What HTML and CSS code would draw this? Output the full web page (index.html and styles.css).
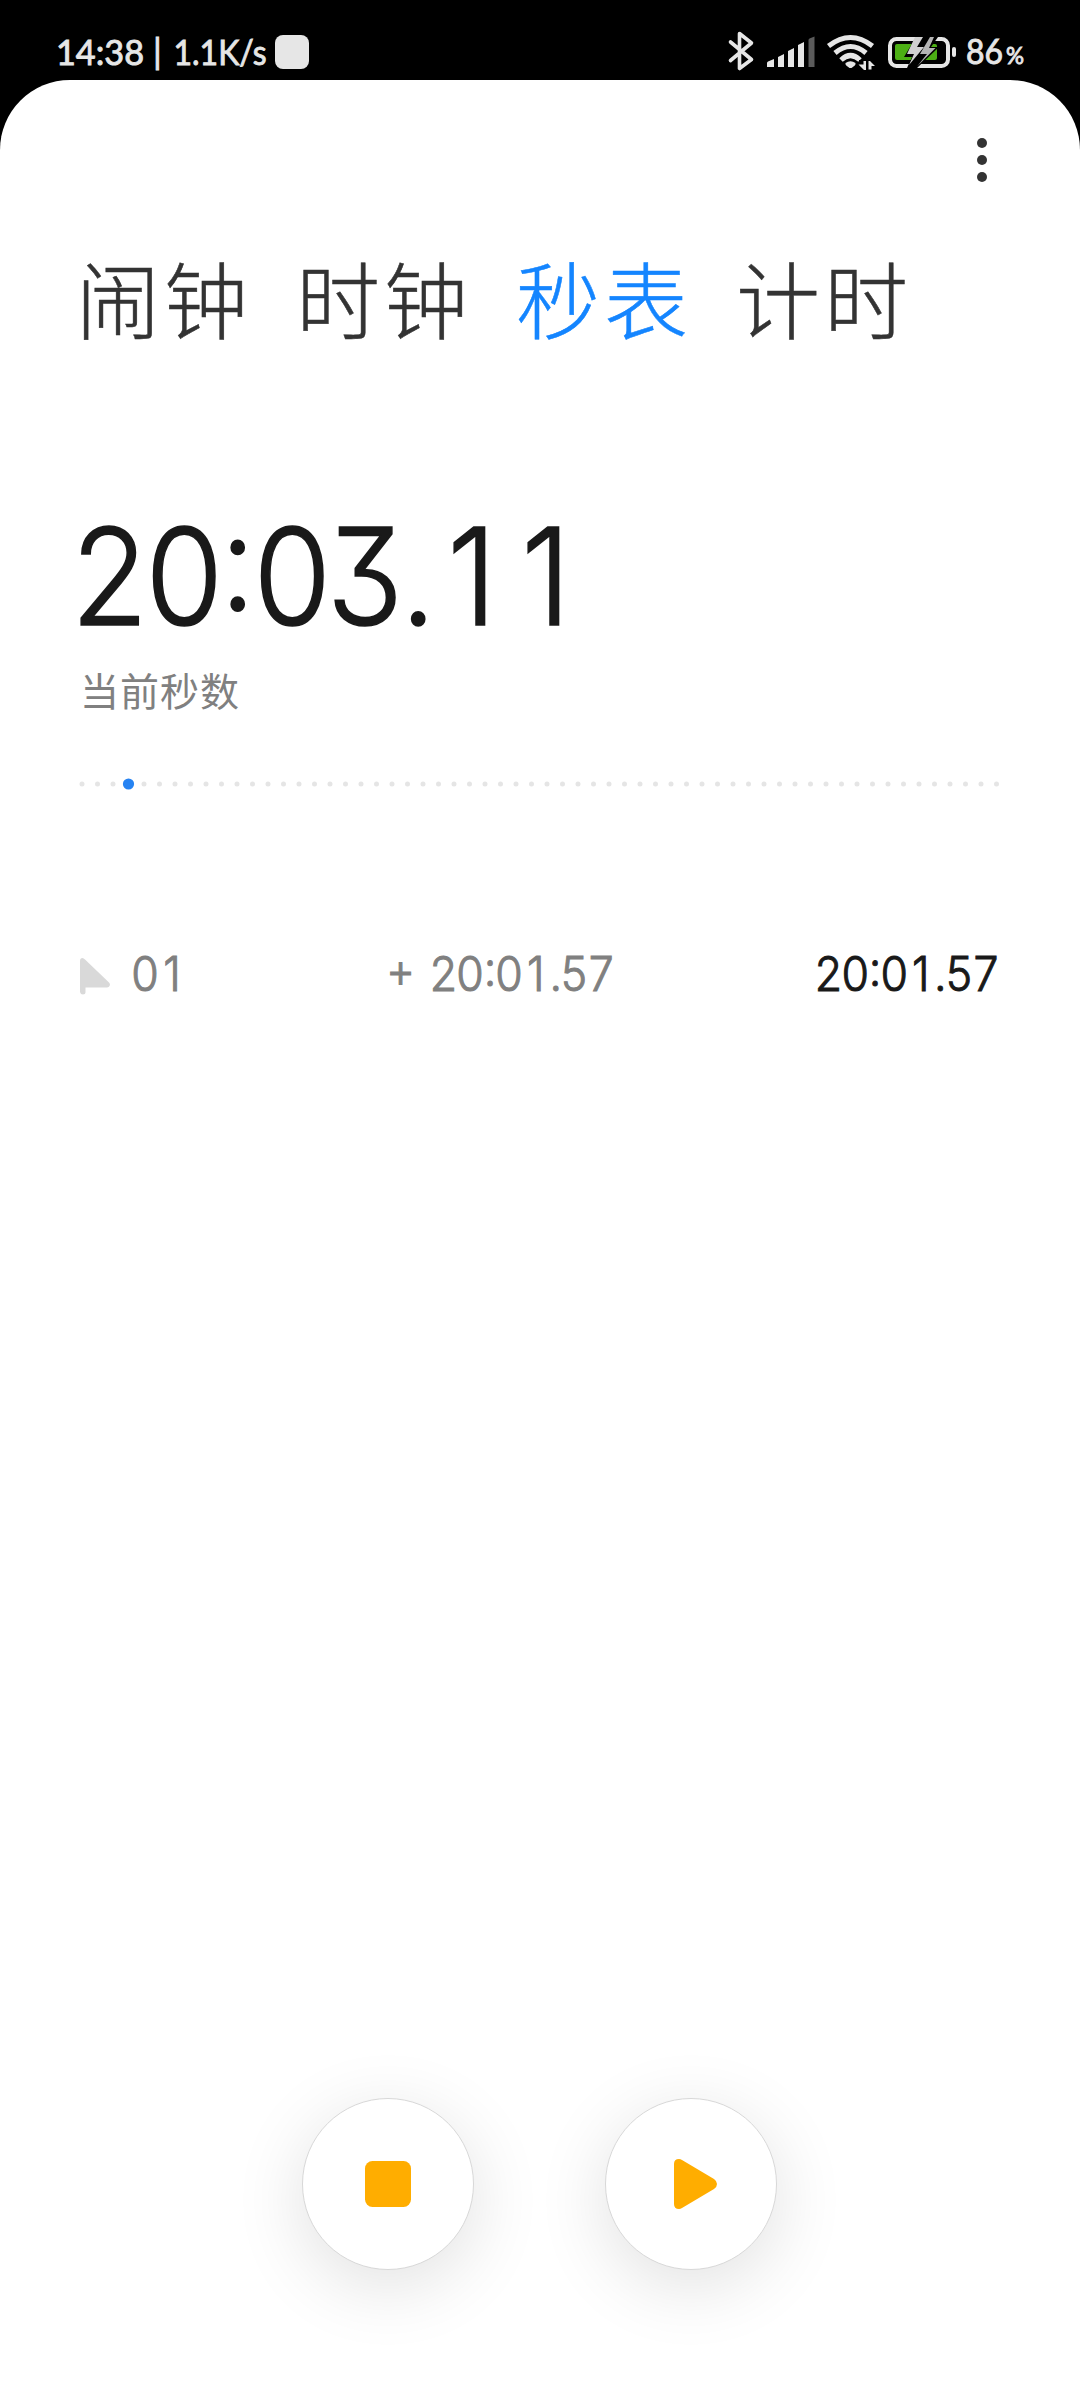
FILE: index.html
```html
<!DOCTYPE html>
<html lang="zh-CN">
<head>
<meta charset="utf-8">
<title>秒表</title>
<link rel="stylesheet" href="styles.css">
</head>
<body>
<header class="status">
  <svg class="status-text" width="218" height="52"><text x="-1" y="39" textLength="88" lengthAdjust="spacingAndGlyphs">14:38</text><text x="96" y="38">|</text><text x="116.500" y="39" textLength="93" lengthAdjust="spacingAndGlyphs">1.1K/s</text></svg>
  <i class="app-dot"></i>
  <svg class="status-icons" width="232" height="44" viewBox="0 0 232 44">
    <g fill="none" stroke="#e6e6e6" stroke-width="3.6" stroke-linejoin="round" stroke-linecap="round">
      <path d="M3.500 14 24.500 31.500 12.500 40.500V5.500L24.500 15 3.500 32.500"/>
    </g>
    <path fill="#e6e6e6" d="M40 39v-4q0-1 1-1.500l6-2.500v8zM51 39V29l6-3v13zM61 39V23l6-3v19zM71 39V17l6-3v25z"/>
    <path fill="#5b5b5b" d="M81.500 39V12q0-1 1-1.500l5-2v30.500z"/>
    <g fill="none" stroke="#e6e6e6" stroke-width="5">
      <path d="M101.500 18Q123.500 1 145.500 18M108 25Q123.500 12 139 25M114 32Q123.500 23 133 32"/>
    </g>
    <path fill="#e6e6e6" d="M118.500 35q5-3.500 10 0 .4 1.500-1 2.800L124.500 40h-2l-3-2.200q-1.400-1.300-1-2.800z"/>
    <path d="M132 32h14v12h-14z"/>
    <path fill="#e6e6e6" d="M136.500 33h2.500v9h-2l-5.500-5.500h5zM141.500 41.500V33h1.500l5 5h-3.500v3.500z"/>
    <rect x="163" y="11" width="58" height="27" rx="6.500" fill="none" stroke="#e6e6e6" stroke-width="4"/>
    <rect x="168" y="16" width="42" height="16" rx="2" fill="#4caf14"/>
    <rect x="225" y="19" width="4" height="10" rx="2" fill="#e6e6e6"/>
    <path d="M189 9 177 29h8l-5 11h10l22-21h-8l7-10z"/>
    <path fill="#d0d0d0" d="M188 9 180 26h7L182 37l15-18h-7l6-10z"/>
    <path fill="#b4b4b4" d="M203 9l-10 17h7L190 38.500 208.500 20H202l5-11z"/>
  </svg>
  <svg class="battery" width="62" height="52"><text x="0" y="38" textLength="37" lengthAdjust="spacingAndGlyphs">86</text><text class="percent" x="40" y="38" textLength="18" lengthAdjust="spacingAndGlyphs">%</text></svg>
</header>
<main class="sheet">
  <div class="toolbar"><div class="more"><i></i><i></i><i></i></div></div>
  <nav class="tabs">
    <span>闹钟</span><span>时钟</span><span class="active">秒表</span><span>计时</span>
  </nav>
  <svg class="timer" width="1080" height="174">
    <text transform="scale(.93 1)" x="117.700 198.100 255.600 314.200 392.500 449.800 507.500 587.100" y="140">20:03.11</text>
  </svg>
  <div class="caption">当前秒数</div>
  <svg class="track" width="924" height="12" viewBox="0 0 924 12">
    <path d="M4 6H920" stroke="#e5e5e5" stroke-width="5" stroke-linecap="round" stroke-dasharray="0 15.500"/>
    <circle cx="50.500" cy="6" r="5.600" fill="#2683f2"/>
  </svg>
  <div class="lap">
    <svg class="flag" width="30" height="37" viewBox="0 0 30 37"><path fill="#d9d9d9" d="M0 3Q0 0 2.500 0 3.500 0 5 1.500L29 24.500q1.500 1.500.8 3Q29 29.500 27 29.500H5.500v5Q5.500 36.500 3 36.500T0 34z"/></svg>
    <svg width="90" height="60"><text transform="scale(.92 1)" x="38 67.500" y="49">01</text></svg>
    <svg class="delta" width="240" height="60">
      <text transform="scale(.92 1)" x="22.300" y="49">+</text>
      <text transform="scale(.92 1)" x="69 97.800 119.600 140.200 169.300 191 210.900 240.500" y="49">20:01.57</text>
    </svg>
    <svg class="total" width="200" height="60"><text transform="scale(.92 1)" x="30.800 60.100 81.500 102.500 131.200 152.500 172.800 202.200" y="49">20:01.57</text></svg>
  </div>
  <footer class="controls">
    <button class="round" aria-label="停止"><svg width="46" height="46"><rect width="46" height="46" rx="7.500" fill="#ffad00"/></svg></button>
    <button class="round" aria-label="继续"><svg width="54" height="54" viewBox="0 0 54 54"><path fill="#ffad00" d="M10 7q0-5 5-5 1.500 0 3 1L50 22q3 2 3 5t-3 5L18 51q-1.500 1-3 1-5 0-5-5z"/></svg></button>
  </footer>
</main>
</body>
</html>
```
FILE: styles.css
```css
* { box-sizing: border-box; }
body {
  margin: 0;
  width: 1080px;
  height: 2400px;
  display: flex;
  flex-direction: column;
  background: #000;
  font-family: Inter, "Noto Sans CJK SC", sans-serif;
}
svg { flex: none; overflow: visible; }
.status {
  height: 80px;
  padding: 26px 52px 0 57px;
  display: flex;
}
.status text { font: 400 35px Lato, sans-serif; fill: #e6e6e6; stroke: #e6e6e6; stroke-width: .9px; }
.status .percent { font-size: 23px; }
.app-dot { width: 34px; height: 34px; margin-top: 9px; border-radius: 8px; background: #e6e6e6; }
.status-icons { margin: 2px 7px 0 auto; }
.sheet {
  height: 2320px;
  display: flex;
  flex-direction: column;
  background: #fff;
  border-radius: 70px 70px 0 0;
}
.toolbar { height: 150px; display: flex; justify-content: flex-end; padding: 58px 93px 0 0; }
.more { display: flex; flex-direction: column; gap: 7px; }
.more i { width: 10px; height: 10px; border-radius: 50%; background: #333; }
.tabs {
  height: 140px;
  display: flex;
  gap: 44px;
  padding-left: 76px;
  font: 300 84px/133px "Noto Sans CJK SC", sans-serif;
  color: #333;
  -webkit-text-stroke: .5px;
}
.tabs span { width: 176px; letter-spacing: 4px; white-space: nowrap; }
.tabs .active { color: #1485ff; }
.timer { margin-top: 115px; }
.timer text {
  font-size: 135px;
  font-weight: 300;
  font-feature-settings: "cv09", "case";
  text-anchor: middle;
  fill: #191919;
  stroke: #191919;
  stroke-width: 1.6px;
}
.caption { height: 60px; padding-left: 80px; font: 400 39px/60px "Noto Sans CJK SC", sans-serif; color: #808080; letter-spacing: 1px; }
.track { margin: 59px 0 0 78px; }
.lap {
  height: 60px;
  margin: 152px 0 0 80px;
  display: flex;
}
.lap text {
  font-size: 48.5px;
  font-weight: 300;
  font-feature-settings: "case";
  text-anchor: middle;
  fill: #808080;
  stroke: #808080;
  stroke-width: 1px;
}
.lap .total text { fill: #191919; stroke: #191919; }
.flag { margin-top: 16px; }
.delta { margin-left: 180px; }
.total { margin-left: 180px; }
.controls {
  margin-top: auto;
  height: 302px;
  padding-right: 1px;
  display: flex;
  justify-content: center;
  gap: 131px;
}
.round {
  width: 172px;
  height: 172px;
  padding: 0;
  display: grid;
  place-items: center;
  border: 1px solid #d8d8d8;
  border-radius: 50%;
  background: #fff;
  box-shadow: 0 16px 72px rgba(0, 0, 0, .12);
}
```
